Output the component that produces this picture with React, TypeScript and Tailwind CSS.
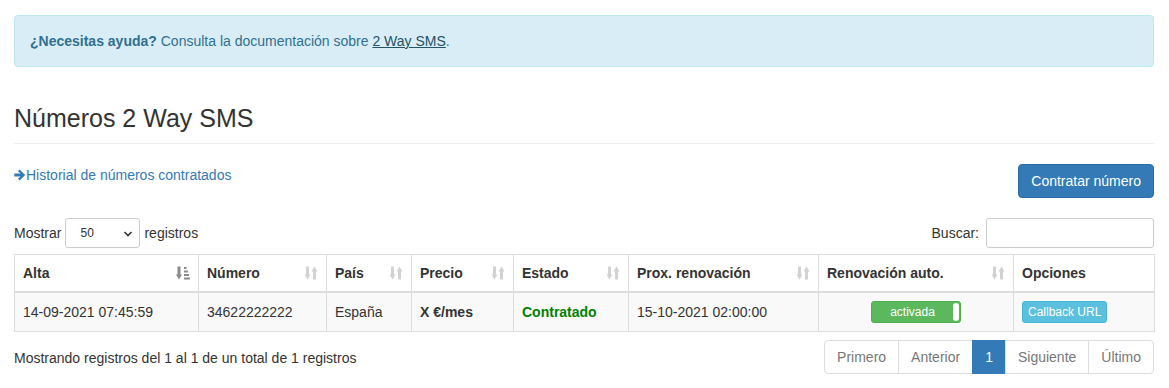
import React from "react";

const SortIcon = ({ active = false }: { active?: boolean }) =>
  active ? (
    <svg width="14" height="14" viewBox="0 0 14 14" className="shrink-0">
      <g fill="#8a8a8a">
        <rect x="1.5" y="0.5" width="3" height="9" />
        <path d="M0 8.5 L6 8.5 L3 13.5 Z" />
        <rect x="8" y="1" width="2.5" height="2" />
        <rect x="8" y="4.5" width="4" height="2" />
        <rect x="8" y="8" width="5" height="2" />
        <rect x="8" y="11.5" width="6" height="2" />
      </g>
    </svg>
  ) : (
    <svg width="14" height="14" viewBox="0 0 14 14" className="shrink-0">
      <g fill="#d2d2d2">
        <rect x="2" y="0.5" width="3" height="9" />
        <path d="M0.5 8.5 L6.5 8.5 L3.5 13.5 Z" />
        <rect x="9" y="4.5" width="3" height="9" />
        <path d="M7.5 5.5 L13.5 5.5 L10.5 0.5 Z" />
      </g>
    </svg>
  );

const headers: { label: string; w: number; sort?: "active" | "normal" }[] = [
  { label: "Alta", w: 184, sort: "active" },
  { label: "Número", w: 128, sort: "normal" },
  { label: "País", w: 85, sort: "normal" },
  { label: "Precio", w: 102, sort: "normal" },
  { label: "Estado", w: 115, sort: "normal" },
  { label: "Prox. renovación", w: 190, sort: "normal" },
  { label: "Renovación auto.", w: 195, sort: "normal" },
  { label: "Opciones", w: 141 },
];

export default function App() {
  return (
    <div className="bg-white min-h-[388px] font-['Liberation_Sans',Arial,sans-serif] text-[14px] leading-[20px] text-[#333]">
      <div className="ml-[14px] w-[1140px] pt-[15px]">
        {/* Alert */}
        <div className="h-[52px] rounded-[4px] border border-[#bce8f1] bg-[#d9edf7] px-[15px] py-[15px] text-[#31708f]">
          <b>¿Necesitas ayuda?</b> Consulta la documentación sobre{" "}
          <a className="underline text-[#245269]" href="#">
            2 Way SMS
          </a>
          .
        </div>

        {/* Page header */}
        <div className="mt-[38px] border-b border-[#eee] pb-[11px]">
          <h3 className="text-[25px] leading-[27px] font-normal text-[#333]">Números 2 Way SMS</h3>
        </div>

        {/* Link + button */}
        <div className="mt-[20px] flex items-start justify-between">
          <a href="#" className="mt-[1px] flex items-center text-[#337ab7]">
            <svg width="12" height="12" viewBox="0 0 12 12">
              <path
                d="M5.6 0.6 L11.2 6 L5.6 11.4 L4 9.8 L6.6 7.4 L0.3 7.4 L0.3 4.6 L6.6 4.6 L4 2.2 Z"
                fill="#337ab7"
              />
            </svg>
            Historial de números contratados
          </a>
          <button className="h-[34px] rounded-[4px] border border-[#2e6da4] bg-[#337ab7] px-[12px] text-[14px] text-white">
            Contratar número
          </button>
        </div>

        {/* Controls */}
        <div className="mt-[20px] flex items-center justify-between">
          <div className="flex items-center">
            <span>Mostrar</span>
            <div className="relative mx-[4px] flex h-[30px] w-[75px] items-center rounded-[3px] border border-[#ccc] bg-white pl-[14px] text-[12px]">
              50
              <svg width="10" height="10" viewBox="0 0 10 10" className="absolute right-[6px] top-[10px]">
                <path d="M1.5 3 L5 6.5 L8.5 3" stroke="#333" strokeWidth="1.6" fill="none" />
              </svg>
            </div>
            <span>registros</span>
          </div>
          <div className="flex items-center">
            <span>Buscar:</span>
            <div className="ml-[7px] h-[30px] w-[168px] rounded-[3px] border border-[#ccc] bg-white" />
          </div>
        </div>

        {/* Table */}
        <table className="mt-[6px] w-[1140px] table-fixed border-collapse">
          <colgroup>
            {headers.map((h) => (
              <col key={h.label} style={{ width: h.w }} />
            ))}
          </colgroup>
          <thead>
            <tr className="h-[37px]">
              {headers.map((h) => (
                <th
                  key={h.label}
                  className="border border-b-2 border-[#ddd] px-[8px] py-[7px] text-left font-bold"
                >
                  <div className="flex items-center justify-between">
                    <span>{h.label}</span>
                    {h.sort && <SortIcon active={h.sort === "active"} />}
                  </div>
                </th>
              ))}
            </tr>
          </thead>
          <tbody>
            <tr className="h-[40px] bg-[#f9f9f9]">
              <td className="border border-[#ddd] px-[8px]">14-09-2021 07:45:59</td>
              <td className="border border-[#ddd] px-[8px]">34622222222</td>
              <td className="border border-[#ddd] px-[8px]">España</td>
              <td className="border border-[#ddd] px-[8px] font-bold">X €/mes</td>
              <td className="border border-[#ddd] px-[8px] font-bold text-[#008000]">Contratado</td>
              <td className="border border-[#ddd] px-[8px]">15-10-2021 02:00:00</td>
              <td className="border border-[#ddd] px-[8px]">
                <div className="flex justify-center">
                  <div className="flex h-[22px] w-[90px] items-center rounded-[3px] border border-[#4cae4c] bg-[#5cb85c] text-[12px] text-white">
                    <span className="flex-1 text-center">activada</span>
                    <span className="mr-[1px] h-[18px] w-[6px] rounded-[3px] bg-white" />
                  </div>
                </div>
              </td>
              <td className="border border-[#ddd] px-[8px]">
                <span className="inline-flex h-[22px] items-center rounded-[3px] border border-[#46b8da] bg-[#5bc0de] px-[5px] text-[12px] text-white">
                  Callback URL
                </span>
              </td>
            </tr>
          </tbody>
        </table>

        {/* Footer */}
        <div className="mt-[8px] flex items-start justify-between">
          <div className="pt-[8px]">Mostrando registros del 1 al 1 de un total de 1 registros</div>
          <div className="flex h-[34px] text-[#777]">
            <span className="flex items-center rounded-l-[4px] border border-[#ddd] bg-white px-[12px]">Primero</span>
            <span className="-ml-px flex items-center border border-[#ddd] bg-white px-[12px]">Anterior</span>
            <span className="-ml-px flex items-center border border-[#337ab7] bg-[#337ab7] px-[12px] text-white">1</span>
            <span className="-ml-px flex items-center border border-[#ddd] bg-white px-[12px]">Siguiente</span>
            <span className="-ml-px flex items-center rounded-r-[4px] border border-[#ddd] bg-white px-[12px]">Último</span>
          </div>
        </div>
      </div>
    </div>
  );
}
